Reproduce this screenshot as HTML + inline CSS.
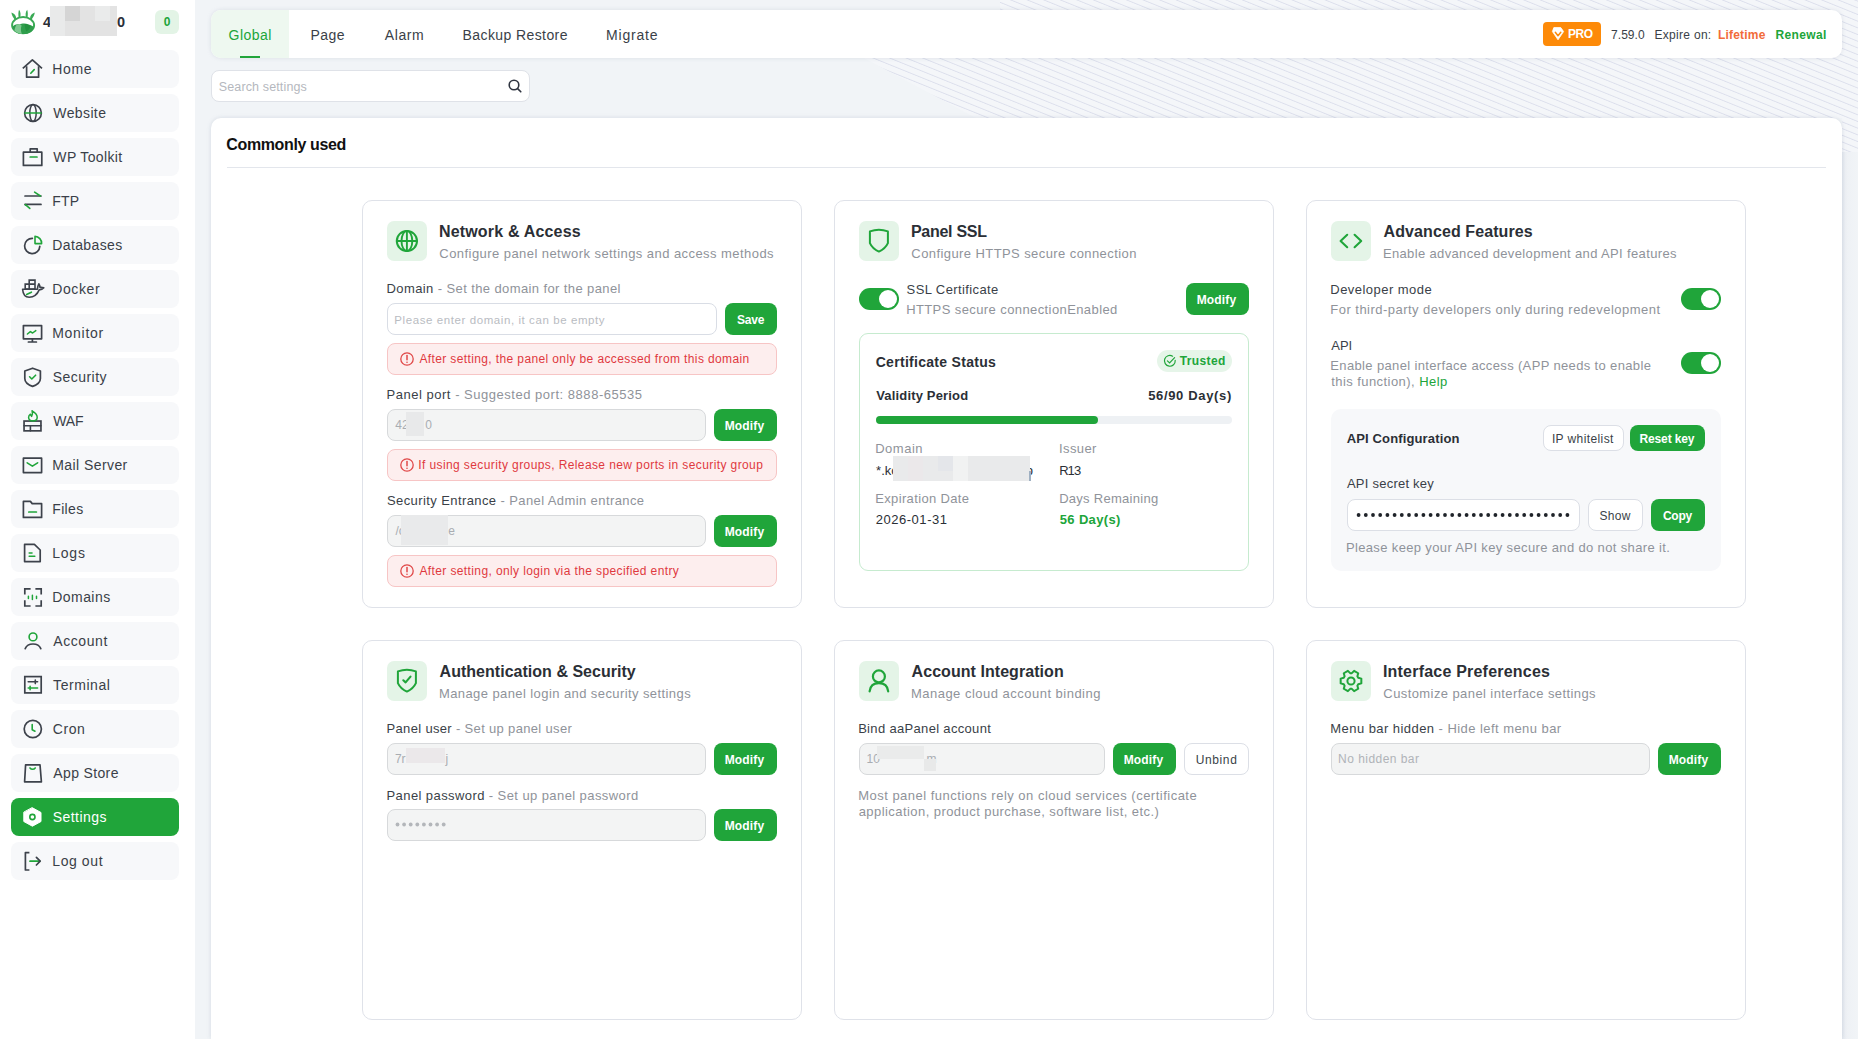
<!DOCTYPE html>
<html><head><meta charset="utf-8">
<style>
*{box-sizing:border-box;margin:0;padding:0}
html,body{width:1858px;height:1039px;overflow:hidden}
body{font-family:"Liberation Sans",sans-serif;color:#333;background:#fff;position:relative}
.abs{position:absolute}
/* sidebar */
#side{position:absolute;left:0;top:0;width:195px;height:1039px;background:#fff}
.mi{position:absolute;left:11px;width:168px;height:38px;border-radius:8px;background:#f7f8fa;font-size:14px;color:#3a3f48}
.mi .t{position:absolute;left:42px;top:11px;line-height:16px}
.mi svg{position:absolute;left:11px;top:9px;width:20px;height:20px;overflow:visible}
.mi.on{background:#20a53a;color:#fff}
/* main */
#main{position:absolute;left:195px;top:0;width:1663px;height:1039px;background:#f1f4f7}
#stripes{position:absolute;left:195px;top:0;width:1663px;height:170px;background:repeating-linear-gradient(22deg,#f4f6f9 0px,#f4f6f9 3.6px,#dcdfec 4.4px,#f4f6f9 5.4px,#f4f6f9 6.2px);clip-path:polygon(805px 0,1663px 0,1663px 152px,1647px 152px,1647px 118px,781px 118px,669px 58px,669px 10px,805px 10px)}
#redge{position:absolute;left:1842px;top:0;width:16px;height:1039px;background:linear-gradient(90deg,#e6eaf0,#eef1f5 30%,#f1f4f7)}
#tabs{position:absolute;left:210px;top:10px;width:1632px;height:48px;background:#fff;border-radius:10px}
.tab{position:absolute;top:0;height:48px;font-size:14px;line-height:48px;color:#3a3f48}
#search{position:absolute;left:211px;top:70px;width:319px;height:32px;background:#fff;border:1px solid #dfe2e8;border-radius:8px}
#panel{position:absolute;left:211px;top:118px;width:1631px;height:921px;background:#fff;border-radius:10px 10px 0 0}
.card{position:absolute;width:440px;background:#fff;border:1px solid #dde0e7;border-radius:10px}
.ibox{position:absolute;left:24px;top:20px;width:40px;height:40px;border-radius:7px;background:#e4f4e7}
.ibox svg{position:absolute;left:8px;top:8px;width:24px;height:24px}
.ct{position:absolute;left:76px;top:21px;font-size:16px;font-weight:bold;color:#2b2f36;line-height:20px;white-space:nowrap}
.cs{position:absolute;left:76px;top:45px;font-size:13px;color:#8c9099;line-height:16px;white-space:nowrap}
.lbl{position:absolute;font-size:13px;color:#3a3f48;line-height:16px;white-space:nowrap}
.lbl span{color:#8c9099}
.inp{position:absolute;height:32px;border:1px solid #d9dde5;border-radius:8px;background:#fff;font-size:12.5px;color:#b5b9c0;line-height:30px;padding-left:8px;white-space:nowrap}
.inp.dis{background:#f3f4f4}
.btn{height:32px;border-radius:8px;background:#20a53a;color:#fff;font-size:13px;font-weight:bold;line-height:32px;text-align:center}
.btn2{height:32px;border-radius:8px;background:#fff;border:1px solid #dcdfe6;color:#3a3f48;font-size:13px;line-height:30px;text-align:center}
.alert{position:absolute;height:32px;border-radius:8px;background:#fdeeee;border:1px solid #f6c4c4;color:#e03a3a;font-size:12.5px;line-height:30px;white-space:nowrap}
.alert svg{position:absolute;left:12px;top:8px;width:14px;height:14px}
.alert .t{position:absolute;left:31px;top:0}
.tog{position:absolute;width:40px;height:22px;border-radius:11px;background:#20a53a}
.tog:after{content:"";position:absolute;right:3px;top:3px;width:16px;height:16px;border-radius:50%;background:#fff}
</style></head><body>
<div id="side"><svg class="abs" style="left:0;top:0;width:45px;height:45px" viewBox="0 0 45 45">
<ellipse cx="23.1" cy="25.2" rx="11" ry="8.1" fill="none" stroke="#3aaa55" stroke-width="2"/>
<path d="M12.6 27 C13.6 24.6 16.6 23.6 19.6 24.4 C21.6 23.4 25.6 23 28.4 24.4 C31 24.8 33.4 26 33.6 27.4 C33 31.6 28.6 34 23.1 34 C17.6 34 13.4 31.6 12.6 27 Z" fill="#2f9e4c"/>
<path d="M16.4 25 C18.4 24 20.4 24.2 21.6 25.4 C20.6 28 20.8 31 21.8 33.9 C18.6 33.6 16 32.4 14.4 30.6 C14.8 28.4 15.4 26.4 16.4 25 Z" fill="#7fc990"/>
<path d="M24.6 24 C27 23.6 29.6 24.6 30.6 26.6 C30 28.4 28.6 30.4 26.4 31.6 C25.4 29.4 24.8 26.8 24.6 24 Z" fill="#24913f"/>
<path d="M11.4 12.6 C14.4 13.4 16.2 15.8 16.2 18.8 L14.6 19.4 C13 17.6 11.8 15.4 11.4 12.6 Z M19 9.8 C20.6 11.6 21 14.4 20.2 17.6 L18.8 17.8 C18.2 15 18.2 12.4 19 9.8 Z M27.2 9.8 C28 12.4 28 15 27.4 17.8 L26 17.6 C25.2 14.4 25.6 11.6 27.2 9.8 Z M34.8 12.6 C34.4 15.4 33.2 17.6 31.6 19.4 L30 18.8 C30 15.8 31.8 13.4 34.8 12.6 Z" fill="#3aaa55"/>
</svg>
<div class="abs" style="left:43px;top:12px;font-size:14.5px;font-weight:bold;color:#2b2f3a;line-height:20px">4</div>
<div class="abs" style="left:50px;top:6px;width:67px;height:30px;background:#e3e3e3"></div>
<div class="abs" style="left:50px;top:6px;width:15px;height:30px;background:#e9eaea"></div>
<div class="abs" style="left:65px;top:6px;width:15px;height:15px;background:#d5d5d5"></div>
<div class="abs" style="left:95px;top:6px;width:15px;height:15px;background:#eaebeb"></div>
<div class="abs" style="left:117px;top:12px;font-size:14.5px;font-weight:bold;color:#2b2f3a;line-height:20px">0</div>
<div class="abs" style="left:155px;top:10px;width:24px;height:24px;border-radius:6px;background:#e3f4e6;color:#20a53a;font-size:12px;font-weight:bold;line-height:24px;text-align:center">0</div>
<div class="mi" style="top:50px"><svg viewBox="0 0 20 20" fill="none" stroke-linecap="round" stroke-linejoin="round" ><path d="M0.8 9.4 L10.4 0.8 L20 9.4" stroke="#3d424b" stroke-width="1.7" stroke-linecap="butt"/><path d="M4.6 7.2 V18.2 H16.6 V7.2" stroke="#3d424b" stroke-width="1.7" stroke-linecap="butt"/><path d="M8.8 14.2 L12.2 10.6" stroke="#20a53a" stroke-width="1.6"/></svg><div class="t" style="left:41.25px;letter-spacing:0.647px">Home</div></div>
<div class="mi" style="top:94px"><svg viewBox="0 0 20 20" fill="none" stroke-linecap="round" stroke-linejoin="round" ><circle cx="11" cy="10" r="8.4" stroke="#3d424b" stroke-width="1.6"/><ellipse cx="11" cy="10" rx="3.2" ry="8.4" stroke="#3d424b" stroke-width="1.5"/><path d="M2.8 10 H19.2" stroke="#20a53a" stroke-width="1.6"/></svg><div class="t" style="left:42.34px;letter-spacing:0.379px">Website</div></div>
<div class="mi" style="top:138px"><svg viewBox="0 0 20 20" fill="none" stroke-linecap="round" stroke-linejoin="round" ><rect x="1.4" y="5.2" width="18.4" height="13.2" stroke="#3d424b" stroke-width="1.7"/><path d="M8.2 5.2 V1.8 H15.2 V5.2" stroke="#3d424b" stroke-width="1.7"/><path d="M8.2 10 H15" stroke="#20a53a" stroke-width="1.7"/></svg><div class="t" style="left:42.34px;letter-spacing:0.360px">WP Toolkit</div></div>
<div class="mi" style="top:182px"><svg viewBox="0 0 20 20" fill="none" stroke-linecap="round" stroke-linejoin="round" ><path d="M3 5 H19" stroke="#3d424b" stroke-width="1.7"/><path d="M12.6 1.2 L18.4 5" stroke="#20a53a" stroke-width="1.6"/><path d="M3 13.4 H19" stroke="#3d424b" stroke-width="1.7"/><path d="M3.4 13.6 L7.8 17.4" stroke="#20a53a" stroke-width="1.6"/></svg><div class="t" style="left:41.25px;letter-spacing:0.175px">FTP</div></div>
<div class="mi" style="top:226px"><svg viewBox="0 0 20 20" fill="none" stroke-linecap="round" stroke-linejoin="round" ><path d="M10.4 3.4 A7.6 7.6 0 1 0 17.8 11.4" stroke="#3d424b" stroke-width="1.7"/><path d="M13 1.4 V8.6 H19.6 A6.8 6.8 0 0 0 13 1.4 Z" stroke="#20a53a" stroke-width="1.6"/></svg><div class="t" style="left:41.25px;letter-spacing:0.381px">Databases</div></div>
<div class="mi" style="top:270px"><svg viewBox="0 0 20 20" fill="none" stroke-linecap="round" stroke-linejoin="round" ><path d="M3.2 5.1 H13 V10 H3.2 Z M7.2 1.1 H13 V5.1 H7.2 Z M7.2 5.1 V10" stroke="#3d424b" stroke-width="1.6" stroke-linecap="butt" stroke-linejoin="miter"/><path d="M0.6 10.2 H15.4 C15.6 8 16 6.2 16.8 4.8 C17.6 5.8 18 7 18 8.4 C19.4 8.2 20.6 8.4 21.8 8.8 C20.6 10.2 19 10.8 17.2 10.9 C15.2 15.6 11.4 18.2 7.2 18.2 C3.6 18.2 1 15.6 0.6 10.2 Z" stroke="#3d424b" stroke-width="1.6"/><path d="M4.6 15.4 L9.4 13.2" stroke="#20a53a" stroke-width="1.6"/></svg><div class="t" style="left:41.25px;letter-spacing:0.591px">Docker</div></div>
<div class="mi" style="top:314px"><svg viewBox="0 0 20 20" fill="none" stroke-linecap="round" stroke-linejoin="round" ><rect x="1.4" y="2.6" width="18.2" height="13.2" stroke="#3d424b" stroke-width="1.7"/><path d="M10.4 15.8 V19 M6.4 19 H14.4" stroke="#3d424b" stroke-width="1.7"/><path d="M5.4 11 L8.4 8.6 L10.6 10 L13.8 7.6" stroke="#20a53a" stroke-width="1.5"/></svg><div class="t" style="left:41.25px;letter-spacing:0.704px">Monitor</div></div>
<div class="mi" style="top:358px"><svg viewBox="0 0 20 20" fill="none" stroke-linecap="round" stroke-linejoin="round" ><path d="M10.6 1.2 L18.4 4 V11.4 C18.4 15 14.8 17.8 10.6 19.4 C6.4 17.8 2.8 15 2.8 11.4 V4 Z" stroke="#3d424b" stroke-width="1.7"/><path d="M7.6 9.8 L9.8 12 L13.6 8.2" stroke="#20a53a" stroke-width="1.6"/></svg><div class="t" style="left:41.76px;letter-spacing:0.457px">Security</div></div>
<div class="mi" style="top:402px"><svg viewBox="0 0 20 20" fill="none" stroke-linecap="round" stroke-linejoin="round" ><rect x="2.05" y="10.05" width="16.9" height="9.8" stroke="#3d424b" stroke-width="1.7" stroke-linejoin="miter"/><path d="M2.05 14.8 H18.95 M8.4 14.8 V19.85" stroke="#3d424b" stroke-width="1.6"/><path d="M10.1 -0.2 C13.4 1.6 15.4 4 15.2 6.6 C15 9 13 10 10.8 10 C8.4 10 6.6 8.8 6.6 6.6 C6.6 5 7.4 3.8 8.4 3.2 L9.6 5.4 C10.6 3.8 10.6 1.6 10.1 -0.2 Z" stroke="#20a53a" stroke-width="1.5"/></svg><div class="t" style="left:42.34px;letter-spacing:-0.236px">WAF</div></div>
<div class="mi" style="top:446px"><svg viewBox="0 0 20 20" fill="none" stroke-linecap="round" stroke-linejoin="round" ><rect x="1.4" y="3.2" width="18.2" height="14.4" stroke="#3d424b" stroke-width="1.7"/><path d="M5.2 7.8 L10.4 11.2 L15.6 7.8" stroke="#20a53a" stroke-width="1.6"/></svg><div class="t" style="left:41.25px;letter-spacing:0.422px">Mail Server</div></div>
<div class="mi" style="top:490px"><svg viewBox="0 0 20 20" fill="none" stroke-linecap="round" stroke-linejoin="round" ><path d="M1.4 18.4 V2.4 H8.4 L10.2 4.6 H19.6 V18.4 Z" stroke="#3d424b" stroke-width="1.7"/><path d="M6.8 13 H14.4" stroke="#20a53a" stroke-width="1.7"/></svg><div class="t" style="left:41.25px;letter-spacing:0.352px">Files</div></div>
<div class="mi" style="top:534px"><svg viewBox="0 0 20 20" fill="none" stroke-linecap="round" stroke-linejoin="round" ><path d="M2.6 1.4 H12.4 L18.2 7 V18.6 H2.6 Z" stroke="#3d424b" stroke-width="1.7"/><path d="M7.2 10 H10 M7.2 13.2 H12.8" stroke="#20a53a" stroke-width="1.6"/></svg><div class="t" style="left:41.25px;letter-spacing:0.770px">Logs</div></div>
<div class="mi" style="top:578px"><svg viewBox="0 0 20 20" fill="none" stroke-linecap="round" stroke-linejoin="round" ><path d="M2.8 7.6 V1.9 H8.6 M13.4 1.9 H19.2 V7.6 M19.2 13.2 V19 H13.4 M8.6 19 H2.8 V13.2" stroke="#3d424b" stroke-width="1.7" stroke-linecap="butt" stroke-linejoin="miter"/><path d="M6.4 9.2 V11.6 M10.4 8.2 V12.6 M14.5 9.2 V11.6" stroke="#20a53a" stroke-width="1.5"/></svg><div class="t" style="left:41.25px;letter-spacing:0.439px">Domains</div></div>
<div class="mi" style="top:622px"><svg viewBox="0 0 20 20" fill="none" stroke-linecap="round" stroke-linejoin="round" ><circle cx="11" cy="5.9" r="3.9" stroke="#20a53a" stroke-width="1.6"/><path d="M3.2 17.6 C4.4 14.6 7.4 13 11 13 C14.6 13 17.6 14.6 18.8 17.6" stroke="#3d424b" stroke-width="1.7"/></svg><div class="t" style="left:42.37px;letter-spacing:0.559px">Account</div></div>
<div class="mi" style="top:666px"><svg viewBox="0 0 20 20" fill="none" stroke-linecap="round" stroke-linejoin="round" ><rect x="2.8" y="1.6" width="16.4" height="16.3" stroke="#3d424b" stroke-width="1.7" stroke-linejoin="miter"/><path d="M6.2 6.8 H15.6 M13.3 5 V8.6" stroke="#3d424b" stroke-width="1.6"/><path d="M6.2 13 H15.6 M8.1 11.2 V14.8" stroke="#20a53a" stroke-width="1.6"/></svg><div class="t" style="left:42.09px;letter-spacing:0.554px">Terminal</div></div>
<div class="mi" style="top:710px"><svg viewBox="0 0 20 20" fill="none" stroke-linecap="round" stroke-linejoin="round" ><circle cx="10.8" cy="10" r="8.6" stroke="#3d424b" stroke-width="1.7"/><path d="M10.2 5.6 V10.8 L13 12.2" stroke="#20a53a" stroke-width="1.6"/></svg><div class="t" style="left:41.69px;letter-spacing:0.597px">Cron</div></div>
<div class="mi" style="top:754px"><svg viewBox="0 0 20 20" fill="none" stroke-linecap="round" stroke-linejoin="round" ><path d="M3.6 1.8 H18 L19.4 18.8 H2.6 Z" stroke="#3d424b" stroke-width="1.7"/><path d="M8 5 C9.2 6.6 12 6.6 13.2 5" stroke="#20a53a" stroke-width="1.6"/></svg><div class="t" style="left:42.37px;letter-spacing:0.350px">App Store</div></div>
<div class="mi on" style="top:798px"><svg viewBox="0 0 20 20" fill="none" stroke-linecap="round" stroke-linejoin="round" ><path d="M10.4 0.8 L19 5.5 V14.5 L10.4 19.2 L1.8 14.5 V5.5 Z" fill="#fff" stroke="#fff" stroke-width="1"/><circle cx="10.4" cy="10" r="2.6" stroke="#20a53a" stroke-width="1.6"/></svg><div class="t" style="left:41.76px;letter-spacing:0.452px">Settings</div></div>
<div class="mi" style="top:842px"><svg viewBox="0 0 20 20" fill="none" stroke-linecap="round" stroke-linejoin="round" ><path d="M7.4 1.6 H3.4 V19 H7.4" stroke="#3d424b" stroke-width="1.7" stroke-linecap="butt"/><path d="M8 10.2 H17.6" stroke="#20a53a" stroke-width="1.7"/><path d="M14.4 6.4 L18.2 10.2 L14.4 14" stroke="#3d424b" stroke-width="1.7"/></svg><div class="t" style="left:41.25px;letter-spacing:0.594px">Log out</div></div></div>
<div id="main"></div><div id="redge"></div><div id="stripes"></div>

<div class="abs" style="left:211px;top:10px;width:1631px;height:48px;background:#fff;border-radius:10px;box-shadow:0 0 4px rgba(140,150,175,0.22)"></div>
<div class="abs" style="left:211px;top:10px;width:78px;height:48px;background:#eef8f0;border-radius:10px 0 0 10px"></div>
<div class="abs" style="left:228.60px;top:26.37px;font-size:14px;line-height:18px;font-weight:normal;color:#20a53a;white-space:nowrap;letter-spacing:0.457px;">Global</div>
<div class="abs" style="left:310.45px;top:26.37px;font-size:14px;line-height:18px;font-weight:normal;color:#3a3f48;white-space:nowrap;letter-spacing:0.461px;">Page</div>
<div class="abs" style="left:384.87px;top:26.37px;font-size:14px;line-height:18px;font-weight:normal;color:#3a3f48;white-space:nowrap;letter-spacing:0.551px;">Alarm</div>
<div class="abs" style="left:462.55px;top:26.37px;font-size:14px;line-height:18px;font-weight:normal;color:#3a3f48;white-space:nowrap;letter-spacing:0.407px;">Backup Restore</div>
<div class="abs" style="left:606.05px;top:26.37px;font-size:14px;line-height:18px;font-weight:normal;color:#3a3f48;white-space:nowrap;letter-spacing:0.802px;">Migrate</div>
<div class="abs" style="left:240px;top:56px;width:20px;height:2px;background:#20a53a"></div>
<div class="abs" style="left:1543px;top:22px;width:58px;height:24px;background:#fd8a08;border-radius:4px"></div>
<svg class="abs" style="left:1551px;top:27px;width:14px;height:14px" viewBox="0 0 14 14"><path d="M2.8 0.6 H9.8 L12.6 4.6 L7 12.8 L1.4 4.6 Z" fill="#fff" stroke="#fff" stroke-width="0.8" stroke-linejoin="round"/><path d="M4.3 5.3 L7 8.7 L9.8 5.3" stroke="#fd8a08" stroke-width="1.5" fill="none" stroke-linecap="round" stroke-linejoin="round"/></svg>
<div class="abs" style="left:1568.10px;top:26.83px;font-size:12px;line-height:15px;font-weight:bold;color:#fff;white-space:nowrap;letter-spacing:-0.547px;">PRO</div>
<div class="abs" style="left:1611.08px;top:28.03px;font-size:12px;line-height:15px;font-weight:normal;color:#3a3f48;white-space:nowrap;letter-spacing:0.028px;">7.59.0</div>
<div class="abs" style="left:1654.52px;top:28.03px;font-size:12px;line-height:15px;font-weight:normal;color:#3a3f48;white-space:nowrap;letter-spacing:0.296px;">Expire on:</div>
<div class="abs" style="left:1717.90px;top:28.03px;font-size:12px;line-height:15px;font-weight:bold;color:#f26b3a;white-space:nowrap;letter-spacing:0.202px;">Lifetime</div>
<div class="abs" style="left:1775.60px;top:28.03px;font-size:12px;line-height:15px;font-weight:bold;color:#20a53a;white-space:nowrap;letter-spacing:0.330px;">Renewal</div>
<div class="abs" style="left:211px;top:70px;width:319px;height:32px;background:#fff;border:1px solid #dfe2e8;border-radius:8px"></div>
<div class="abs" style="left:218.73px;top:78.52px;font-size:12.5px;line-height:16px;font-weight:normal;color:#b5b8be;white-space:nowrap;letter-spacing:0.140px;">Search settings</div>
<svg class="abs" style="left:508px;top:79px;width:14px;height:14px" viewBox="0 0 14 14" fill="none"><circle cx="6" cy="6" r="4.8" stroke="#2f3440" stroke-width="1.6"/><path d="M9.6 9.6 L12.8 12.8" stroke="#2f3440" stroke-width="1.6" stroke-linecap="round"/></svg>
<div class="abs" style="left:211px;top:118px;width:1631px;height:921px;background:#fff;border-radius:10px 10px 0 0;box-shadow:0 0 4px rgba(140,150,175,0.28)"></div>
<div class="abs" style="left:226.34px;top:135.01px;font-size:16px;line-height:20px;font-weight:bold;color:#111;white-space:nowrap;letter-spacing:-0.379px;">Commonly used</div>
<div class="abs" style="left:227px;top:167px;width:1599px;height:1px;background:#e3e6ec"></div>
<div class="abs" style="left:362px;top:200px;width:440px;height:408px;border:1px solid #dfe2e9;border-radius:10px;background:#fff"></div>
<div class="abs" style="left:362px;top:640px;width:440px;height:380px;border:1px solid #dfe2e9;border-radius:10px;background:#fff"></div>
<div class="abs" style="left:834px;top:200px;width:440px;height:408px;border:1px solid #dfe2e9;border-radius:10px;background:#fff"></div>
<div class="abs" style="left:834px;top:640px;width:440px;height:380px;border:1px solid #dfe2e9;border-radius:10px;background:#fff"></div>
<div class="abs" style="left:1306px;top:200px;width:440px;height:408px;border:1px solid #dfe2e9;border-radius:10px;background:#fff"></div>
<div class="abs" style="left:1306px;top:640px;width:440px;height:380px;border:1px solid #dfe2e9;border-radius:10px;background:#fff"></div>
<div class="abs" style="left:387px;top:221px;width:40px;height:40px;background:#e4f4e7;border-radius:7px"></div>
<svg class="abs" style="left:395px;top:229px;width:24px;height:24px;overflow:visible" viewBox="0 0 24 24" fill="none" stroke="#20a53a" stroke-width="2" stroke-linecap="round" stroke-linejoin="round"><circle cx="11.9" cy="12" r="10.1" stroke-width="2"/><ellipse cx="11.9" cy="12" rx="5.4" ry="10.1" stroke-width="1.9"/><path d="M1.8 12 H22 M11.9 1.9 V22.1" stroke-width="1.9"/></svg>
<div class="abs" style="left:438.93px;top:222.01px;font-size:16px;line-height:20px;font-weight:bold;color:#2b2f36;white-space:nowrap;letter-spacing:0.179px;">Network &amp; Access</div>
<div class="abs" style="left:439.34px;top:246.00px;font-size:13px;line-height:16px;font-weight:normal;color:#8f939a;white-space:nowrap;letter-spacing:0.441px;">Configure panel network settings and access methods</div>
<div class="abs" style="left:386.53px;top:281.30px;font-size:13px;line-height:16px;font-weight:normal;color:#3a3f48;white-space:nowrap;letter-spacing:0.397px;">Domain<span style="color:#8f939a"> - Set the domain for the panel</span></div>
<div class="abs" style="left:387px;top:303px;width:330px;height:32px;border:1px solid #d9dde5;border-radius:8px;background:#fff"></div>
<div class="abs" style="left:394.36px;top:312.65px;font-size:11.5px;line-height:14px;font-weight:normal;color:#b9bcc2;white-space:nowrap;letter-spacing:0.581px;">Please enter domain, it can be empty</div>
<div class="abs" style="left:725px;top:303px;width:52px;height:32px;background:#20a53a;border-radius:8px"></div>
<div class="abs" style="left:737.05px;top:312.64px;font-size:12px;line-height:15px;font-weight:bold;color:#fff;white-space:nowrap;letter-spacing:-0.187px;">Save</div>
<div class="abs" style="left:387px;top:343px;width:390px;height:32px;border:1px solid #f7c5c5;border-radius:8px;background:#fdeeee"></div>
<svg class="abs" style="left:400px;top:352px;width:14px;height:14px" viewBox="0 0 14 14" fill="none"><circle cx="7" cy="7" r="6.2" stroke="#e04848" stroke-width="1.3"/><path d="M7 3.6 V7.8" stroke="#e04848" stroke-width="1.5" stroke-linecap="round"/><circle cx="7" cy="10.2" r="0.8" fill="#e04848"/></svg>
<div class="abs" style="left:419.38px;top:352.23px;font-size:12px;line-height:15px;font-weight:normal;color:#e0393e;white-space:nowrap;letter-spacing:0.381px;">After setting, the panel only be accessed from this domain</div>
<div class="abs" style="left:386.53px;top:386.70px;font-size:13px;line-height:16px;font-weight:normal;color:#3a3f48;white-space:nowrap;letter-spacing:0.522px;">Panel port<span style="color:#8f939a"> - Suggested port: 8888-65535</span></div>
<div class="abs" style="left:387px;top:409px;width:319px;height:32px;border:1px solid #d7d9db;border-radius:8px;background:#f3f4f4"></div>
<div class="abs" style="left:395.22px;top:418.43px;font-size:12px;line-height:15px;font-weight:normal;color:#a9adb2;white-space:nowrap;">42&nbsp;&nbsp;&nbsp;&nbsp;&nbsp;0</div>
<div class="abs" style="left:406px;top:412px;width:18px;height:24px;background:#e8e9ea"></div>
<div class="abs" style="left:714px;top:409px;width:63px;height:32px;background:#20a53a;border-radius:8px"></div>
<div class="abs" style="left:724.70px;top:418.64px;font-size:12px;line-height:15px;font-weight:bold;color:#fff;white-space:nowrap;letter-spacing:0.162px;">Modify</div>
<div class="abs" style="left:387px;top:449px;width:390px;height:32px;border:1px solid #f7c5c5;border-radius:8px;background:#fdeeee"></div>
<svg class="abs" style="left:400px;top:458px;width:14px;height:14px" viewBox="0 0 14 14" fill="none"><circle cx="7" cy="7" r="6.2" stroke="#e04848" stroke-width="1.3"/><path d="M7 3.6 V7.8" stroke="#e04848" stroke-width="1.5" stroke-linecap="round"/><circle cx="7" cy="10.2" r="0.8" fill="#e04848"/></svg>
<div class="abs" style="left:418.29px;top:458.23px;font-size:12px;line-height:15px;font-weight:normal;color:#e0393e;white-space:nowrap;letter-spacing:0.396px;">If using security groups, Release new ports in security group</div>
<div class="abs" style="left:387.01px;top:492.90px;font-size:13px;line-height:16px;font-weight:normal;color:#3a3f48;white-space:nowrap;letter-spacing:0.402px;">Security Entrance<span style="color:#8f939a"> - Panel Admin entrance</span></div>
<div class="abs" style="left:387px;top:515px;width:319px;height:32px;border:1px solid #d7d9db;border-radius:8px;background:#f3f4f4"></div>
<div class="abs" style="left:395.50px;top:524.43px;font-size:12px;line-height:15px;font-weight:normal;color:#a9adb2;white-space:nowrap;">/c&nbsp;&nbsp;&nbsp;&nbsp;&nbsp;&nbsp;&nbsp;&nbsp;&nbsp;&nbsp;&nbsp;&nbsp;&nbsp;e</div>
<div class="abs" style="left:401px;top:515px;width:47px;height:30px;background:#e9eaeb"></div>
<div class="abs" style="left:714px;top:515px;width:63px;height:32px;background:#20a53a;border-radius:8px"></div>
<div class="abs" style="left:724.70px;top:524.64px;font-size:12px;line-height:15px;font-weight:bold;color:#fff;white-space:nowrap;letter-spacing:0.162px;">Modify</div>
<div class="abs" style="left:387px;top:555px;width:390px;height:32px;border:1px solid #f7c5c5;border-radius:8px;background:#fdeeee"></div>
<svg class="abs" style="left:400px;top:564px;width:14px;height:14px" viewBox="0 0 14 14" fill="none"><circle cx="7" cy="7" r="6.2" stroke="#e04848" stroke-width="1.3"/><path d="M7 3.6 V7.8" stroke="#e04848" stroke-width="1.5" stroke-linecap="round"/><circle cx="7" cy="10.2" r="0.8" fill="#e04848"/></svg>
<div class="abs" style="left:419.38px;top:564.23px;font-size:12px;line-height:15px;font-weight:normal;color:#e0393e;white-space:nowrap;letter-spacing:0.388px;">After setting, only login via the specified entry</div>
<div class="abs" style="left:859px;top:221px;width:40px;height:40px;background:#e4f4e7;border-radius:7px"></div>
<svg class="abs" style="left:867px;top:228px;width:24px;height:24px;overflow:visible" viewBox="0 0 24 24" fill="none" stroke="#20a53a" stroke-width="2" stroke-linecap="round" stroke-linejoin="round"><path d="M2.9 3.4 Q11.9 0.2 20.9 3.4 V15.2 C19 19.4 15.6 22 11.9 23.6 C8.2 22 4.8 19.4 2.9 15.2 Z" stroke-width="2"/></svg>
<div class="abs" style="left:910.93px;top:222.01px;font-size:16px;line-height:20px;font-weight:bold;color:#2b2f36;white-space:nowrap;letter-spacing:-0.267px;">Panel SSL</div>
<div class="abs" style="left:911.34px;top:246.00px;font-size:13px;line-height:16px;font-weight:normal;color:#8f939a;white-space:nowrap;letter-spacing:0.417px;">Configure HTTPS secure connection</div>
<div class="abs" style="left:859px;top:288px;width:40px;height:22px;background:#20a53a;border-radius:11px"></div>
<div class="abs" style="left:879px;top:290px;width:18px;height:18px;background:#fff;border-radius:50%"></div>
<div class="abs" style="left:906.61px;top:281.90px;font-size:13px;line-height:16px;font-weight:normal;color:#3a3f48;white-space:nowrap;letter-spacing:0.388px;">SSL Certificate</div>
<div class="abs" style="left:906.13px;top:301.70px;font-size:13px;line-height:16px;font-weight:normal;color:#8f939a;white-space:nowrap;letter-spacing:0.404px;">HTTPS secure connectionEnabled</div>
<div class="abs" style="left:1186px;top:283px;width:63px;height:32px;background:#20a53a;border-radius:8px"></div>
<div class="abs" style="left:1196.70px;top:292.64px;font-size:12px;line-height:15px;font-weight:bold;color:#fff;white-space:nowrap;letter-spacing:0.162px;">Modify</div>
<div class="abs" style="left:859px;top:333px;width:390px;height:238px;border:1px solid #c6ebcf;border-radius:9px;background:#fff"></div>
<div class="abs" style="left:875.73px;top:353.27px;font-size:14px;line-height:18px;font-weight:bold;color:#2b2f36;white-space:nowrap;letter-spacing:0.291px;">Certificate Status</div>
<div class="abs" style="left:1157px;top:350px;width:75px;height:22px;background:#e6f5e9;border-radius:11px"></div>
<svg class="abs" style="left:1163px;top:354px;width:14px;height:14px" viewBox="0 0 14 14" fill="none" stroke="#20a53a" stroke-width="1.2" stroke-linecap="round"><path d="M12.2 6.4 A5.4 5.4 0 1 1 9.6 2.2"/><path d="M4.4 6.8 L6.6 9 L11.6 3.6"/></svg>
<div class="abs" style="left:1179.77px;top:354.23px;font-size:12px;line-height:15px;font-weight:bold;color:#20a53a;white-space:nowrap;letter-spacing:0.364px;">Trusted</div>
<div class="abs" style="left:876.21px;top:388.30px;font-size:13px;line-height:16px;font-weight:bold;color:#2b2f36;white-space:nowrap;letter-spacing:0.169px;">Validity Period</div>
<div class="abs" style="left:1148.20px;top:388.30px;font-size:13px;line-height:16px;font-weight:bold;color:#2b2f36;white-space:nowrap;letter-spacing:0.649px;">56/90 Day(s)</div>
<div class="abs" style="left:876px;top:416px;width:356px;height:8px;background:#eef1f4;border-radius:4px"></div>
<div class="abs" style="left:876px;top:416px;width:222px;height:8px;background:#20a53a;border-radius:4px"></div>
<div class="abs" style="left:875.23px;top:441.20px;font-size:13px;line-height:16px;font-weight:normal;color:#8f939a;white-space:nowrap;letter-spacing:0.500px;">Domain</div>
<div class="abs" style="left:1059.00px;top:441.20px;font-size:13px;line-height:16px;font-weight:normal;color:#8f939a;white-space:nowrap;letter-spacing:0.402px;">Issuer</div>
<div class="abs" style="left:876.09px;top:462.70px;font-size:13px;line-height:16px;font-weight:normal;color:#2b2f36;white-space:nowrap;">*.kc</div>
<div class="abs" style="left:1025.66px;top:462.70px;font-size:13px;line-height:16px;font-weight:normal;color:#2b2f36;white-space:nowrap;">p</div>
<div class="abs" style="left:893px;top:456px;width:137px;height:25px;background:#e9eaeb"></div>
<div class="abs" style="left:1029px;top:471px;width:1.5px;height:10px;background:#9fb0c2"></div>
<div class="abs" style="left:908px;top:456px;width:15px;height:25px;background:#ebe8ea"></div>
<div class="abs" style="left:938px;top:456px;width:15px;height:15px;background:#e4e6ea"></div>
<div class="abs" style="left:953px;top:456px;width:15px;height:25px;background:#f1f2f2"></div>
<div class="abs" style="left:1059.13px;top:462.70px;font-size:13px;line-height:16px;font-weight:normal;color:#2b2f36;white-space:nowrap;letter-spacing:-0.911px;">R13</div>
<div class="abs" style="left:875.23px;top:490.70px;font-size:13px;line-height:16px;font-weight:normal;color:#8f939a;white-space:nowrap;letter-spacing:0.353px;">Expiration Date</div>
<div class="abs" style="left:1059.13px;top:490.70px;font-size:13px;line-height:16px;font-weight:normal;color:#8f939a;white-space:nowrap;letter-spacing:0.284px;">Days Remaining</div>
<div class="abs" style="left:875.65px;top:512.30px;font-size:13px;line-height:16px;font-weight:normal;color:#2b2f36;white-space:nowrap;letter-spacing:0.540px;">2026-01-31</div>
<div class="abs" style="left:1059.80px;top:512.30px;font-size:13px;line-height:16px;font-weight:bold;color:#20a53a;white-space:nowrap;letter-spacing:0.340px;">56 Day(s)</div>
<div class="abs" style="left:1331px;top:221px;width:40px;height:40px;background:#e4f4e7;border-radius:7px"></div>
<svg class="abs" style="left:1339px;top:229px;width:24px;height:24px;overflow:visible" viewBox="0 0 24 24" fill="none" stroke="#20a53a" stroke-width="2" stroke-linecap="round" stroke-linejoin="round"><path d="M8.2 5.8 L1.6 12 L8.2 18.2 M15.6 5.8 L22.2 12 L15.6 18.2" stroke-width="2.1"/></svg>
<div class="abs" style="left:1383.60px;top:222.01px;font-size:16px;line-height:20px;font-weight:bold;color:#2b2f36;white-space:nowrap;letter-spacing:0.089px;">Advanced Features</div>
<div class="abs" style="left:1382.93px;top:246.00px;font-size:13px;line-height:16px;font-weight:normal;color:#8f939a;white-space:nowrap;letter-spacing:0.356px;">Enable advanced development and API features</div>
<div class="abs" style="left:1330.33px;top:281.90px;font-size:13px;line-height:16px;font-weight:normal;color:#3a3f48;white-space:nowrap;letter-spacing:0.456px;">Developer mode</div>
<div class="abs" style="left:1330.33px;top:301.70px;font-size:13px;line-height:16px;font-weight:normal;color:#8f939a;white-space:nowrap;letter-spacing:0.471px;">For third-party developers only during redevelopment</div>
<div class="abs" style="left:1681px;top:288px;width:40px;height:22px;background:#20a53a;border-radius:11px"></div>
<div class="abs" style="left:1701px;top:290px;width:18px;height:18px;background:#fff;border-radius:50%"></div>
<div class="abs" style="left:1331.37px;top:337.80px;font-size:13px;line-height:16px;font-weight:normal;color:#3a3f48;white-space:nowrap;letter-spacing:-0.114px;">API</div>
<div class="abs" style="left:1330.33px;top:358.10px;font-size:13px;line-height:16px;font-weight:normal;color:#8f939a;white-space:nowrap;letter-spacing:0.352px;">Enable panel interface access (APP needs to enable</div>
<div class="abs" style="left:1331.20px;top:373.70px;font-size:13px;line-height:16px;font-weight:normal;color:#8f939a;white-space:nowrap;letter-spacing:0.440px;">this function), <span style="color:#20a53a">Help</span></div>
<div class="abs" style="left:1681px;top:352px;width:40px;height:22px;background:#20a53a;border-radius:11px"></div>
<div class="abs" style="left:1701px;top:354px;width:18px;height:18px;background:#fff;border-radius:50%"></div>
<div class="abs" style="left:1331px;top:409px;width:390px;height:162px;background:#f7f8fa;border-radius:10px"></div>
<div class="abs" style="left:1346.68px;top:430.50px;font-size:13px;line-height:16px;font-weight:bold;color:#2b2f36;white-space:nowrap;letter-spacing:0.141px;">API Configuration</div>
<div class="abs" style="left:1543px;top:425px;width:81px;height:26px;background:#fff;border:1px solid #dcdfe6;border-radius:8px"></div>
<div class="abs" style="left:1551.89px;top:431.64px;font-size:12px;line-height:15px;font-weight:normal;color:#3a3f48;white-space:nowrap;letter-spacing:0.397px;">IP whitelist</div>
<div class="abs" style="left:1630px;top:425px;width:75px;height:26px;background:#20a53a;border-radius:8px"></div>
<div class="abs" style="left:1639.50px;top:431.64px;font-size:12px;line-height:15px;font-weight:bold;color:#fff;white-space:nowrap;letter-spacing:-0.133px;">Reset key</div>
<div class="abs" style="left:1346.97px;top:475.60px;font-size:13px;line-height:16px;font-weight:normal;color:#3a3f48;white-space:nowrap;letter-spacing:0.234px;">API secret key</div>
<div class="abs" style="left:1347px;top:499px;width:233px;height:32px;background:#fff;border:1px solid #dcdfe6;border-radius:8px"></div>
<svg class="abs" style="left:1355.6px;top:512px;width:220px;height:6px" viewBox="0 0 220 6" fill="#1f2329"><circle cx="2.60" cy="3" r="1.9"/><circle cx="9.80" cy="3" r="1.9"/><circle cx="17.00" cy="3" r="1.9"/><circle cx="24.20" cy="3" r="1.9"/><circle cx="31.40" cy="3" r="1.9"/><circle cx="38.60" cy="3" r="1.9"/><circle cx="45.80" cy="3" r="1.9"/><circle cx="53.00" cy="3" r="1.9"/><circle cx="60.20" cy="3" r="1.9"/><circle cx="67.40" cy="3" r="1.9"/><circle cx="74.60" cy="3" r="1.9"/><circle cx="81.80" cy="3" r="1.9"/><circle cx="89.00" cy="3" r="1.9"/><circle cx="96.20" cy="3" r="1.9"/><circle cx="103.40" cy="3" r="1.9"/><circle cx="110.60" cy="3" r="1.9"/><circle cx="117.80" cy="3" r="1.9"/><circle cx="125.00" cy="3" r="1.9"/><circle cx="132.20" cy="3" r="1.9"/><circle cx="139.40" cy="3" r="1.9"/><circle cx="146.60" cy="3" r="1.9"/><circle cx="153.80" cy="3" r="1.9"/><circle cx="161.00" cy="3" r="1.9"/><circle cx="168.20" cy="3" r="1.9"/><circle cx="175.40" cy="3" r="1.9"/><circle cx="182.60" cy="3" r="1.9"/><circle cx="189.80" cy="3" r="1.9"/><circle cx="197.00" cy="3" r="1.9"/><circle cx="204.20" cy="3" r="1.9"/><circle cx="211.40" cy="3" r="1.9"/></svg>
<div class="abs" style="left:1588px;top:499px;width:55px;height:32px;background:#fff;border:1px solid #dcdfe6;border-radius:8px"></div>
<div class="abs" style="left:1599.46px;top:508.64px;font-size:12px;line-height:15px;font-weight:normal;color:#3a3f48;white-space:nowrap;letter-spacing:0.300px;">Show</div>
<div class="abs" style="left:1651px;top:499px;width:54px;height:32px;background:#20a53a;border-radius:8px"></div>
<div class="abs" style="left:1662.91px;top:508.64px;font-size:12px;line-height:15px;font-weight:bold;color:#fff;white-space:nowrap;letter-spacing:-0.214px;">Copy</div>
<div class="abs" style="left:1345.93px;top:539.90px;font-size:13px;line-height:16px;font-weight:normal;color:#8f939a;white-space:nowrap;letter-spacing:0.357px;">Please keep your API key secure and do not share it.</div>
<div class="abs" style="left:387px;top:661px;width:40px;height:40px;background:#e4f4e7;border-radius:7px"></div>
<svg class="abs" style="left:395px;top:668px;width:24px;height:24px;overflow:visible" viewBox="0 0 24 24" fill="none" stroke="#20a53a" stroke-width="2" stroke-linecap="round" stroke-linejoin="round"><path d="M2.9 3.4 Q11.9 0.2 20.9 3.4 V15.2 C19 19.4 15.6 22 11.9 23.6 C8.2 22 4.8 19.4 2.9 15.2 Z" stroke-width="2"/><path d="M8.3 12.3 L10.6 14.4 L15.5 8.6" stroke-width="2.1"/></svg>
<div class="abs" style="left:439.60px;top:662.01px;font-size:16px;line-height:20px;font-weight:bold;color:#2b2f36;white-space:nowrap;letter-spacing:0.023px;">Authentication &amp; Security</div>
<div class="abs" style="left:438.93px;top:686.00px;font-size:13px;line-height:16px;font-weight:normal;color:#8f939a;white-space:nowrap;letter-spacing:0.414px;">Manage panel login and security settings</div>
<div class="abs" style="left:386.53px;top:721.30px;font-size:13px;line-height:16px;font-weight:normal;color:#3a3f48;white-space:nowrap;letter-spacing:0.335px;">Panel user<span style="color:#8f939a"> - Set up panel user</span></div>
<div class="abs" style="left:387px;top:743px;width:319px;height:32px;border:1px solid #d7d9db;border-radius:8px;background:#f3f4f4"></div>
<div class="abs" style="left:394.88px;top:752.43px;font-size:12px;line-height:15px;font-weight:normal;color:#a9adb2;white-space:nowrap;">7r&nbsp;&nbsp;&nbsp;&nbsp;&nbsp;&nbsp;&nbsp;&nbsp;&nbsp;&nbsp;&nbsp;&nbsp;j</div>
<div class="abs" style="left:406px;top:748px;width:39px;height:15px;background:#ebe8ea"></div>
<div class="abs" style="left:714px;top:743px;width:63px;height:32px;background:#20a53a;border-radius:8px"></div>
<div class="abs" style="left:724.70px;top:752.64px;font-size:12px;line-height:15px;font-weight:bold;color:#fff;white-space:nowrap;letter-spacing:0.162px;">Modify</div>
<div class="abs" style="left:386.53px;top:787.70px;font-size:13px;line-height:16px;font-weight:normal;color:#3a3f48;white-space:nowrap;letter-spacing:0.414px;">Panel password<span style="color:#8f939a"> - Set up panel password</span></div>
<div class="abs" style="left:387px;top:809px;width:319px;height:32px;border:1px solid #d7d9db;border-radius:8px;background:#f3f4f4"></div>
<svg class="abs" style="left:395px;top:822px;width:60px;height:5px" viewBox="0 0 60 5" fill="#b3b6ba"><circle cx="2.50" cy="2.5" r="1.9"/><circle cx="9.10" cy="2.5" r="1.9"/><circle cx="15.70" cy="2.5" r="1.9"/><circle cx="22.30" cy="2.5" r="1.9"/><circle cx="28.90" cy="2.5" r="1.9"/><circle cx="35.50" cy="2.5" r="1.9"/><circle cx="42.10" cy="2.5" r="1.9"/><circle cx="48.70" cy="2.5" r="1.9"/></svg>
<div class="abs" style="left:714px;top:809px;width:63px;height:32px;background:#20a53a;border-radius:8px"></div>
<div class="abs" style="left:724.70px;top:818.64px;font-size:12px;line-height:15px;font-weight:bold;color:#fff;white-space:nowrap;letter-spacing:0.162px;">Modify</div>
<div class="abs" style="left:859px;top:661px;width:40px;height:40px;background:#e4f4e7;border-radius:7px"></div>
<svg class="abs" style="left:867px;top:669px;width:24px;height:24px;overflow:visible" viewBox="0 0 24 24" fill="none" stroke="#20a53a" stroke-width="2" stroke-linecap="round" stroke-linejoin="round"><circle cx="11.9" cy="7.4" r="6" stroke-width="2.2"/><path d="M2.6 22.4 C3.2 17 7 14.2 11.9 14.2 C16.8 14.2 20.6 17 21.2 22.4" stroke-width="2.2"/></svg>
<div class="abs" style="left:911.60px;top:662.01px;font-size:16px;line-height:20px;font-weight:bold;color:#2b2f36;white-space:nowrap;letter-spacing:0.053px;">Account Integration</div>
<div class="abs" style="left:910.93px;top:686.00px;font-size:13px;line-height:16px;font-weight:normal;color:#8f939a;white-space:nowrap;letter-spacing:0.488px;">Manage cloud account binding</div>
<div class="abs" style="left:858.13px;top:721.30px;font-size:13px;line-height:16px;font-weight:normal;color:#3a3f48;white-space:nowrap;letter-spacing:0.328px;">Bind aaPanel account</div>
<div class="abs" style="left:859px;top:743px;width:246px;height:32px;border:1px solid #d7d9db;border-radius:8px;background:#f3f4f4"></div>
<div class="abs" style="left:866.59px;top:752.43px;font-size:12px;line-height:15px;font-weight:normal;color:#a9adb2;white-space:nowrap;">10&nbsp;&nbsp;&nbsp;&nbsp;&nbsp;&nbsp;&nbsp;&nbsp;&nbsp;&nbsp;&nbsp;&nbsp;&nbsp;&nbsp;m</div>
<div class="abs" style="left:877px;top:746px;width:47px;height:13px;background:#eaebeb"></div>
<div class="abs" style="left:924px;top:759px;width:12px;height:12px;background:#e8e9e9"></div>
<div class="abs" style="left:1113px;top:743px;width:63px;height:32px;background:#20a53a;border-radius:8px"></div>
<div class="abs" style="left:1123.70px;top:752.64px;font-size:12px;line-height:15px;font-weight:bold;color:#fff;white-space:nowrap;letter-spacing:0.162px;">Modify</div>
<div class="abs" style="left:1184px;top:743px;width:65px;height:32px;background:#fff;border:1px solid #dcdfe6;border-radius:8px"></div>
<div class="abs" style="left:1195.67px;top:752.64px;font-size:12px;line-height:15px;font-weight:normal;color:#3a3f48;white-space:nowrap;letter-spacing:0.634px;">Unbind</div>
<div class="abs" style="left:858.13px;top:788.20px;font-size:13px;line-height:16px;font-weight:normal;color:#8f939a;white-space:nowrap;letter-spacing:0.494px;">Most panel functions rely on cloud services (certificate</div>
<div class="abs" style="left:858.65px;top:803.80px;font-size:13px;line-height:16px;font-weight:normal;color:#8f939a;white-space:nowrap;letter-spacing:0.440px;">application, product purchase, software list, etc.)</div>
<div class="abs" style="left:1331px;top:661px;width:40px;height:40px;background:#e4f4e7;border-radius:7px"></div>
<svg class="abs" style="left:1339px;top:669px;width:24px;height:24px;overflow:visible" viewBox="0 0 24 24" fill="none" stroke="#20a53a" stroke-width="2" stroke-linecap="round" stroke-linejoin="round"><path d="M19.22 8.79 L22.33 9.62 L22.33 14.38 L19.22 15.21 L18.39 16.64 L19.23 19.75 L15.10 22.14 L12.83 19.86 L11.17 19.86 L8.90 22.14 L4.77 19.75 L5.61 16.64 L4.78 15.21 L1.67 14.38 L1.67 9.62 L4.78 8.79 L5.61 7.36 L4.77 4.25 L8.90 1.86 L11.17 4.14 L12.83 4.14 L15.10 1.86 L19.23 4.25 L18.39 7.36 Z" stroke-width="2"/><circle cx="12" cy="12" r="3.6" stroke-width="2"/></svg>
<div class="abs" style="left:1382.93px;top:662.01px;font-size:16px;line-height:20px;font-weight:bold;color:#2b2f36;white-space:nowrap;letter-spacing:0.212px;">Interface Preferences</div>
<div class="abs" style="left:1383.34px;top:686.00px;font-size:13px;line-height:16px;font-weight:normal;color:#8f939a;white-space:nowrap;letter-spacing:0.411px;">Customize panel interface settings</div>
<div class="abs" style="left:1330.33px;top:721.30px;font-size:13px;line-height:16px;font-weight:normal;color:#3a3f48;white-space:nowrap;letter-spacing:0.442px;">Menu bar hidden<span style="color:#8f939a"> - Hide left menu bar</span></div>
<div class="abs" style="left:1331px;top:743px;width:319px;height:32px;border:1px solid #d7d9db;border-radius:8px;background:#f3f4f4"></div>
<div class="abs" style="left:1338.12px;top:752.43px;font-size:12px;line-height:15px;font-weight:normal;color:#b0b3b8;white-space:nowrap;letter-spacing:0.451px;">No hidden bar</div>
<div class="abs" style="left:1658px;top:743px;width:63px;height:32px;background:#20a53a;border-radius:8px"></div>
<div class="abs" style="left:1668.70px;top:752.64px;font-size:12px;line-height:15px;font-weight:bold;color:#fff;white-space:nowrap;letter-spacing:0.162px;">Modify</div>
</body></html>
